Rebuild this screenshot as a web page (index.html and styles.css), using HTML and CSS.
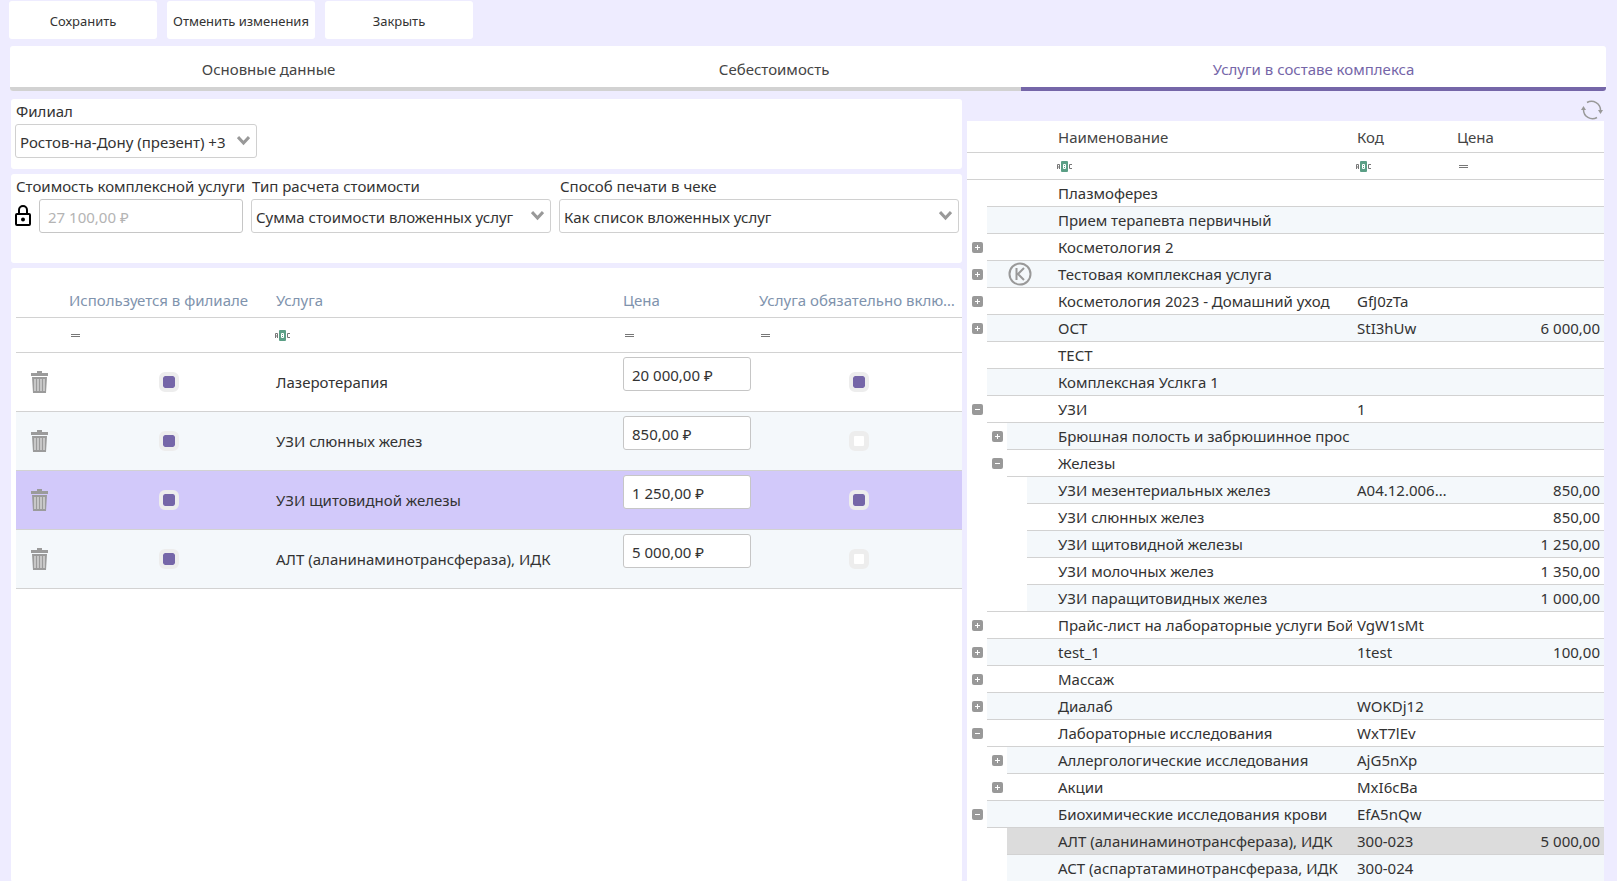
FILE: index.html
```
<!DOCTYPE html>
<html lang="ru">
<head>
	<meta charset="UTF-8">
	<meta name="viewport" content="width=device-width, initial-scale=1.0">
	<title>Комплексная услуга</title>
	<link rel="stylesheet" href="styles.css">
</head>
<body>
	<svg class="sprite">
		<symbol id="trash" viewBox="0 0 18 22">
			<path d="M6 0h5v2h6v3H0V2h6z" fill="#9b9b9b"/>
			<path d="M1 6h15l-1 16H2z" fill="#9b9b9b"/>
			<path d="M4 8v12M7 8v12M10 8v12M13 8v12" stroke="#e4e4e4" stroke-width="1.200"/>
		</symbol>
		<symbol id="abc" viewBox="0 0 16 11">
			<path d="M.5 8V3.500h2V8M.5 6h2" fill="none" stroke="#777"/>
			<rect x="4" width="7" height="11" rx="1" fill="#5b9f86"/>
			<path d="M6.500 3.500h2v4h-2zM6.500 5.500h2" fill="none" stroke="#fff"/>
			<path d="M15 3.500h-2.500v4H15" fill="none" stroke="#777"/>
		</symbol>
		<symbol id="eq" viewBox="0 0 9 3">
			<path d="M0 0h9v1H0zM0 2h9v1H0z" fill="#777" shape-rendering="crispEdges"/>
		</symbol>
	</svg>

	<div class="toolbar">
		<button type="button">Сохранить</button>
		<button type="button">Отменить изменения</button>
		<button type="button">Закрыть</button>
	</div>

	<nav class="tabs">
		<a href="#main">Основные данные</a>
		<a href="#cost">Себестоимость</a>
		<a href="#services" class="active">Услуги в составе комплекса</a>
	</nav>

	<div class="content">
		<div class="left">
			<section class="panel branch">
				<label for="branch">Филиал</label>
				<select id="branch"><option>Ростов-на-Дону (презент) +3</option></select>
			</section>

			<section class="panel params">
				<div class="field cost">
					<label for="cost">Стоимость комплексной услуги</label>
					<div class="cost-row">
						<svg class="lock" viewBox="0 0 16 22">
							<rect x="1" y="9" width="14" height="11" rx="1" fill="none" stroke="#000" stroke-width="2"/>
							<path d="M4 9V5a4 4 0 0 1 8 0v4" fill="none" stroke="#000" stroke-width="2"/>
							<circle cx="8" cy="14.500" r="2" fill="#000"/>
						</svg>
						<input type="text" id="cost" value="27 100,00 ₽" disabled>
					</div>
				</div>
				<div class="field calc">
					<label for="calc">Тип расчета стоимости</label>
					<select id="calc"><option>Сумма стоимости вложенных услуг</option></select>
				</div>
				<div class="field print">
					<label for="print">Способ печати в чеке</label>
					<select id="print"><option>Как список вложенных услуг</option></select>
				</div>
			</section>

			<section class="panel services">
				<table class="grid">
					<colgroup>
						<col class="c-del"><col class="c-use"><col class="c-name"><col class="c-price"><col class="c-req">
					</colgroup>
					<thead>
						<tr>
							<th></th>
							<th>Используется в филиале</th>
							<th>Услуга</th>
							<th>Цена</th>
							<th>Услуга обязательно включена</th>
						</tr>
						<tr class="filter">
							<td></td>
							<td><svg class="eq"><use href="#eq"/></svg></td>
							<td><svg class="abc"><use href="#abc"/></svg></td>
							<td><svg class="eq"><use href="#eq"/></svg></td>
							<td><svg class="eq"><use href="#eq"/></svg></td>
						</tr>
					</thead>
					<tbody>
						<tr>
							<td><button type="button" class="del" aria-label="Удалить"><svg><use href="#trash"/></svg></button></td>
							<td class="center"><input type="checkbox" aria-label="Используется в филиале" checked></td>
							<td>Лазеротерапия</td>
							<td class="price"><input type="text" aria-label="Цена" value="20 000,00 ₽"></td>
							<td class="center"><input type="checkbox" aria-label="Услуга обязательна" checked></td>
						</tr>
						<tr>
							<td><button type="button" class="del" aria-label="Удалить"><svg><use href="#trash"/></svg></button></td>
							<td class="center"><input type="checkbox" aria-label="Используется в филиале" checked></td>
							<td>УЗИ слюнных желез</td>
							<td class="price"><input type="text" aria-label="Цена" value="850,00 ₽"></td>
							<td class="center"><input type="checkbox" aria-label="Услуга обязательна"></td>
						</tr>
						<tr class="selected">
							<td><button type="button" class="del" aria-label="Удалить"><svg><use href="#trash"/></svg></button></td>
							<td class="center"><input type="checkbox" aria-label="Используется в филиале" checked></td>
							<td>УЗИ щитовидной железы</td>
							<td class="price"><input type="text" aria-label="Цена" value="1 250,00 ₽"></td>
							<td class="center"><input type="checkbox" aria-label="Услуга обязательна" checked></td>
						</tr>
						<tr>
							<td><button type="button" class="del" aria-label="Удалить"><svg><use href="#trash"/></svg></button></td>
							<td class="center"><input type="checkbox" aria-label="Используется в филиале" checked></td>
							<td>АЛТ (аланинаминотрансфераза), ИДК</td>
							<td class="price"><input type="text" aria-label="Цена" value="5 000,00 ₽"></td>
							<td class="center"><input type="checkbox" aria-label="Услуга обязательна"></td>
						</tr>
					</tbody>
				</table>
			</section>
		</div>

		<div class="right">
			<button type="button" class="refresh" aria-label="Обновить">
				<svg viewBox="0 0 22 22" fill="none" stroke="#999" stroke-width="1.500">
					<path d="M6 3.500a9 9 0 0 1 13.500 8M16 18.500a9 9 0 0 1-13.500-8"/>
					<path d="M17 11h5l-2.500 4zM0 11h5L2.500 7z" fill="#999" stroke="none"/>
				</svg>
			</button>
			<table class="tree">
				<colgroup>
					<col class="t-lvl"><col class="t-lvl"><col class="t-lvl"><col class="t-icon"><col class="t-name"><col class="t-code"><col class="t-price">
				</colgroup>
				<thead>
					<tr><th colspan="4"></th><th>Наименование</th><th>Код</th><th>Цена</th></tr>
					<tr class="filter">
						<td colspan="4"></td>
						<td><svg class="abc"><use href="#abc"/></svg></td>
						<td><svg class="abc"><use href="#abc"/></svg></td>
						<td><svg class="eq"><use href="#eq"/></svg></td>
					</tr>
				</thead>
				<tbody>
					<tr><td class="lvl"></td><td colspan="3"></td><td>Плазмоферез</td><td></td><td></td></tr>
					<tr><td class="lvl"></td><td colspan="3"></td><td>Прием терапевта первичный</td><td></td><td></td></tr>
					<tr><td class="lvl"><button type="button" class="exp plus" aria-label="Развернуть"></button></td><td colspan="3"></td><td>Косметология 2</td><td></td><td></td></tr>
					<tr>
						<td class="lvl"><button type="button" class="exp plus" aria-label="Развернуть"></button></td>
						<td colspan="3" class="center">
							<svg class="complex" viewBox="0 0 24 24" fill="none" stroke="#999" stroke-width="2">
								<circle cx="12" cy="12" r="10.500"/>
								<path d="M8.500 6v12M16 6l-6 6 6 6M10 12H8.500"/>
							</svg>
						</td>
						<td>Тестовая комплексная услуга</td><td></td><td></td>
					</tr>
					<tr><td class="lvl"><button type="button" class="exp plus" aria-label="Развернуть"></button></td><td colspan="3"></td><td>Косметология 2023 - Домашний уход</td><td>GfJ0zTa</td><td></td></tr>
					<tr><td class="lvl"><button type="button" class="exp plus" aria-label="Развернуть"></button></td><td colspan="3"></td><td>ОСТ</td><td>StI3hUw</td><td>6 000,00</td></tr>
					<tr><td class="lvl"></td><td colspan="3"></td><td>ТЕСТ</td><td></td><td></td></tr>
					<tr><td class="lvl"></td><td colspan="3"></td><td>Комплексная Услкга 1</td><td></td><td></td></tr>
					<tr><td class="lvl"><button type="button" class="exp" aria-label="Свернуть"></button></td><td colspan="3"></td><td>УЗИ</td><td>1</td><td></td></tr>
					<tr><td class="lvl"></td><td class="lvl"><button type="button" class="exp plus" aria-label="Развернуть"></button></td><td colspan="2"></td><td>Брюшная полость и забрюшинное прос</td><td></td><td></td></tr>
					<tr><td class="lvl"></td><td class="lvl"><button type="button" class="exp" aria-label="Свернуть"></button></td><td colspan="2"></td><td>Железы</td><td></td><td></td></tr>
					<tr><td class="lvl"></td><td class="lvl"></td><td class="lvl"></td><td></td><td>УЗИ мезентериальных желез</td><td>A04.12.006.001</td><td>850,00</td></tr>
					<tr><td class="lvl"></td><td class="lvl"></td><td class="lvl"></td><td></td><td>УЗИ слюнных желез</td><td></td><td>850,00</td></tr>
					<tr><td class="lvl"></td><td class="lvl"></td><td class="lvl"></td><td></td><td>УЗИ щитовидной железы</td><td></td><td>1 250,00</td></tr>
					<tr><td class="lvl"></td><td class="lvl"></td><td class="lvl"></td><td></td><td>УЗИ молочных желез</td><td></td><td>1 350,00</td></tr>
					<tr><td class="lvl"></td><td class="lvl end"></td><td class="lvl end"></td><td></td><td>УЗИ паращитовидных желез</td><td></td><td>1 000,00</td></tr>
					<tr><td class="lvl"><button type="button" class="exp plus" aria-label="Развернуть"></button></td><td colspan="3"></td><td>Прайс-лист на лабораторные услуги Бой</td><td>VgW1sMt</td><td></td></tr>
					<tr><td class="lvl"><button type="button" class="exp plus" aria-label="Развернуть"></button></td><td colspan="3"></td><td>test_1</td><td>1test</td><td>100,00</td></tr>
					<tr><td class="lvl"><button type="button" class="exp plus" aria-label="Развернуть"></button></td><td colspan="3"></td><td>Массаж</td><td></td><td></td></tr>
					<tr><td class="lvl"><button type="button" class="exp plus" aria-label="Развернуть"></button></td><td colspan="3"></td><td>Диалаб</td><td>WOKDj12</td><td></td></tr>
					<tr><td class="lvl"><button type="button" class="exp" aria-label="Свернуть"></button></td><td colspan="3"></td><td>Лабораторные исследования</td><td>WxT7lEv</td><td></td></tr>
					<tr><td class="lvl"></td><td class="lvl"><button type="button" class="exp plus" aria-label="Развернуть"></button></td><td colspan="2"></td><td>Аллергологические исследования</td><td>AjG5nXp</td><td></td></tr>
					<tr><td class="lvl"></td><td class="lvl end"><button type="button" class="exp plus" aria-label="Развернуть"></button></td><td colspan="2"></td><td>Акции</td><td>MxI6cBa</td><td></td></tr>
					<tr><td class="lvl"><button type="button" class="exp" aria-label="Свернуть"></button></td><td colspan="3"></td><td>Биохимические исследования крови</td><td>EfA5nQw</td><td></td></tr>
					<tr class="current"><td class="lvl"></td><td class="lvl"></td><td colspan="2"></td><td>АЛТ (аланинаминотрансфераза), ИДК</td><td>300-023</td><td>5 000,00</td></tr>
					<tr><td class="lvl"></td><td class="lvl"></td><td colspan="2"></td><td>АСТ (аспартатаминотрансфераза, ИДК</td><td>300-024</td><td></td></tr>
				</tbody>
			</table>
		</div>
	</div>
</body>
</html>
```

FILE: styles.css
```
* {
	box-sizing: border-box;
}
body {
	display: flex;
	flex-direction: column;
	height: 100vh;
	margin: 0;
	padding: 1px 11px 0 9px;
	overflow: hidden;
	background: #eeecff;
	color: #333;
	font: 15px/20px "Noto Sans", "Open Sans", sans-serif;
}
button, input, select {
	margin: 0;
	font: inherit;
	color: inherit;
}
.sprite {
	position: absolute;
	width: 0;
	height: 0;
}
.toolbar {
	display: flex;
	gap: 10px;
}
.toolbar button {
	width: 148px;
	height: 38px;
	padding: 1px 0 0;
	border: 0;
	border-radius: 3px;
	background: #fff;
	font-size: 13px;
	white-space: nowrap;
}
.tabs {
	display: flex;
	flex: none;
	margin: 7px 0 0 1px;
	border-radius: 3px;
	overflow: hidden;
}
.tabs a {
	flex: 1 1 auto;
	height: 45px;
	padding-top: 2px;
	border-bottom: 4px solid #d2d2d2;
	background: #fff;
	color: #444;
	line-height: 42px;
	text-align: center;
	text-decoration: none;
}
.tabs a.active {
	border-color: #7566a8;
	color: #7566a8;
}
.content {
	display: grid;
	grid-template-columns: 951fr 637fr;
	gap: 5px;
	flex: 1;
	min-height: 0;
	margin: 8px 2px 0 2px;
}
.left {
	display: flex;
	flex-direction: column;
	gap: 5px;
	min-width: 0;
}
.panel {
	border-radius: 3px;
	background: #fff;
}
label {
	display: block;
	height: 24px;
	padding-left: 1px;
	line-height: 22px;
	white-space: nowrap;
}
select {
	display: block;
	width: 100%;
	height: 34px;
	padding: 2px 20px 0 4px;
	border: 1px solid #d0d0d0;
	border-radius: 3px;
	appearance: none;
	background: #fff url("data:image/svg+xml,%3Csvg xmlns='http://www.w3.org/2000/svg' width='13' height='10'%3E%3Cpath d='M1 1l5.500 6L12 1' fill='none' stroke='%23999' stroke-width='3'/%3E%3C/svg%3E") no-repeat right 6px center;
}
.branch {
	height: 70px;
	padding: 1px 4px;
}
.branch select {
	width: 242px;
}
.params {
	display: flex;
	gap: 8px;
	height: 89px;
	padding: 1px 3px 0 4px;
}
.field.cost {
	width: 228px;
}
.field.calc {
	width: 300px;
}
.field.print {
	flex: 1;
}
.cost-row {
	display: flex;
	align-items: center;
	gap: 8px;
}
.lock {
	width: 16px;
	height: 22px;
}
input[type="text"] {
	height: 34px;
	padding: 2px 8px 0;
	border: 1px solid #c6c6c6;
	border-radius: 3px;
	background: #fff;
}
.cost-row input {
	flex: 1;
	min-width: 0;
}
.cost-row input:disabled {
	color: #b4b4b4;
}
.services {
	flex: 1;
	padding: 15px 0 0 5px;
}
table {
	width: 100%;
	border-collapse: separate;
	border-spacing: 0;
	table-layout: fixed;
}
th, td {
	padding: 0 0 0 5px;
	border-bottom: 1px solid #d2d2d2;
	overflow: hidden;
	text-align: left;
	text-overflow: ellipsis;
	white-space: nowrap;
	font-weight: normal;
}
td svg {
	display: block;
}
td.center {
	padding: 0;
	text-align: center;
}
.eq {
	width: 9px;
	height: 3px;
	margin-left: 2px;
}
.abc {
	width: 16px;
	height: 11px;
	margin-left: -1px;
}
.c-del {
	width: 48px;
}
.c-use {
	width: 207px;
}
.c-price {
	width: 136px;
}
.c-req {
	width: 208px;
}
.grid th {
	height: 35px;
	color: #8093ad;
}
.grid .filter td {
	height: 35px;
}
.grid tbody td {
	height: 59px;
}
tbody tr:nth-child(even) td {
	background: #f4f8fb;
}
.grid tbody .selected td {
	background: #d2c9fa;
}
.grid .price {
	padding-top: 4px;
	vertical-align: top;
}
.price input {
	display: block;
	width: 128px;
}
.del {
	display: block;
	width: 18px;
	height: 22px;
	margin-left: 10px;
	padding: 0;
	border: 0;
	background: none;
}
.del svg {
	width: 18px;
	height: 22px;
}
.grid .center {
	padding-left: 2px;
}
input[type="checkbox"] {
	display: block;
	width: 20px;
	height: 20px;
	margin: 0 auto;
	border: 5px solid #ededed;
	border-radius: 6px;
	appearance: none;
	background: #fff;
}
input[type="checkbox"]:checked {
	border-width: 4px;
	background: #7566a8 padding-box;
}
.refresh {
	display: block;
	width: 22px;
	height: 22px;
	margin: 0 1px 0 auto;
	padding: 0;
	border: 0;
	background: none;
}
.refresh svg {
	display: block;
}
.tree {
	background: #fff;
}
.t-lvl {
	width: 20px;
}
.t-icon {
	width: 26px;
}
.t-code {
	width: 100px;
}
.t-price {
	width: 152px;
}
.tree th {
	height: 32px;
	color: #444;
}
.tree .filter td,
.tree tbody td {
	height: 27px;
}
.tree tbody td {
	line-height: 22px;
}
.tree td:nth-last-child(3) {
	text-overflow: clip;
}
.tree td:nth-last-child(2) {
	padding-right: 5px;
}
.tree tbody td:last-child {
	padding-right: 4px;
	text-align: right;
}
.tree tbody td.center {
	padding: 0;
}
.tree tbody td.lvl {
	padding: 0;
	border-bottom-color: transparent;
	background: #fff;
}
.tree tbody td.end {
	border-bottom-color: #d2d2d2;
}
.tree tbody .current td:not(.lvl) {
	background: #dcdcdc;
}
.complex {
	width: 24px;
	height: 24px;
	margin: 0 auto;
}
/* плюс и минус раскрытия ветки */
.exp {
	display: block;
	width: 11px;
	height: 11px;
	margin: 0 auto;
	padding: 0;
	border: 0;
	border-radius: 2px;
	background: linear-gradient(#fff, #fff) center / 5px 1px no-repeat #999;
}
.exp.plus {
	background: linear-gradient(#fff, #fff) center / 5px 1px no-repeat, linear-gradient(#fff, #fff) center / 1px 5px no-repeat #999;
}
```
